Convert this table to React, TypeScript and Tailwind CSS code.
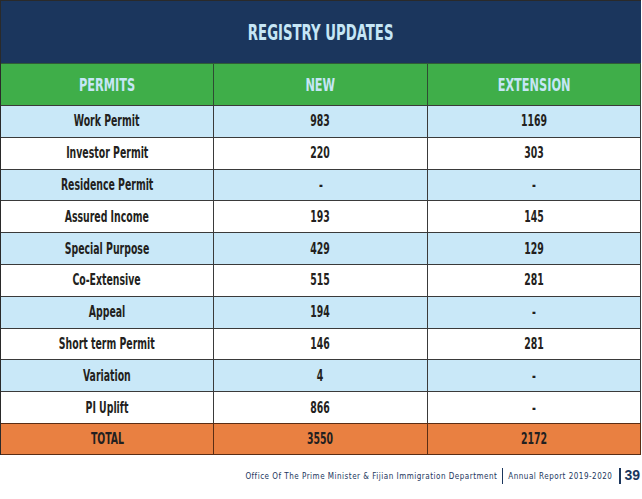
import React from "react";

const rows: [string, string, string][] = [
  ["Work Permit", "983", "1169"],
  ["Investor Permit", "220", "303"],
  ["Residence Permit", "-", "-"],
  ["Assured Income", "193", "145"],
  ["Special Purpose", "429", "129"],
  ["Co-Extensive", "515", "281"],
  ["Appeal", "194", "-"],
  ["Short term Permit", "146", "281"],
  ["Variation", "4", "-"],
  ["PI Uplift", "866", "-"],
];

const font = { fontFamily: '"DejaVu Sans Condensed", "DejaVu Sans", sans-serif' };

function T({ children }: { children: React.ReactNode }) {
  return <span className="inline-block whitespace-nowrap scale-x-[0.65]">{children}</span>;
}

function H({ children }: { children: React.ReactNode }) {
  return <span className="inline-block whitespace-nowrap scale-x-[0.7]">{children}</span>;
}

export default function App() {
  return (
    <div className="w-[642px] h-[499px] bg-white relative overflow-hidden" style={font}>
      <div className="w-[641px] border-l border-t border-[#2a2a2a]">
        <div className="h-[62px] bg-[#1b365d] flex items-center justify-center text-[#c6e6f6] font-bold text-[22px]">
          <span className="inline-block whitespace-nowrap scale-x-[0.67] pt-[1px]">REGISTRY UPDATES</span>
        </div>
        <div className="grid grid-cols-[213px_214px_213px] h-[42px] bg-[#3fae49] border-t border-[#2f5d36] text-[#c6e6f6] font-bold text-[18px]">
          <div className="flex items-center justify-center border-r border-[#2f4a33]"><H>PERMITS</H></div>
          <div className="flex items-center justify-center border-r border-[#2f4a33]"><H>NEW</H></div>
          <div className="flex items-center justify-center border-r border-[#2f4a33]"><H>EXTENSION</H></div>
        </div>
        {rows.map((r, i) => (
          <div
            key={r[0]}
            className={`grid grid-cols-[213px_214px_213px] h-[31.8px] border-t border-[#3a3a3a] text-[#231f20] text-[16px] font-semibold ${i % 2 === 0 ? "bg-[#c9e8f8]" : "bg-white"}`}
          >
            <div className="flex items-center justify-center border-r border-[#3a3a3a]"><T>{r[0]}</T></div>
            <div className="flex items-center justify-center border-r border-[#3a3a3a]"><T>{r[1]}</T></div>
            <div className="flex items-center justify-center border-r border-[#3a3a3a]"><T>{r[2]}</T></div>
          </div>
        ))}
        <div className="grid grid-cols-[213px_214px_213px] h-[32px] border-t border-b border-[#5a2d14] bg-[#e98041] text-[#231f20] text-[16px] font-semibold">
          <div className="flex items-center justify-center border-r border-[#5a2d14]"><T>TOTAL</T></div>
          <div className="flex items-center justify-center border-r border-[#5a2d14]"><T>3550</T></div>
          <div className="flex items-center justify-center border-r border-[#5a2d14]"><T>2172</T></div>
        </div>
      </div>
      <div className="absolute right-[2px] top-[467px] flex items-center text-[#1b365d] h-[17px] text-[8px] tracking-[0.5px]">
        <span className="whitespace-nowrap pt-[3px]">Office Of The Prime Minister &amp; Fijian Immigration Department</span>
        <span className="mx-[5px] w-px h-[16px] bg-[#1b365d]" />
        <span className="whitespace-nowrap pt-[3px]">Annual Report 2019-2020</span>
        <span className="ml-[7px] mr-[3px] w-[2px] h-[16px] bg-[#1b365d]" />
        <span className="font-bold text-[14px] tracking-normal" style={{ fontFamily: '"Liberation Sans", sans-serif' }}>39</span>
      </div>
    </div>
  );
}
